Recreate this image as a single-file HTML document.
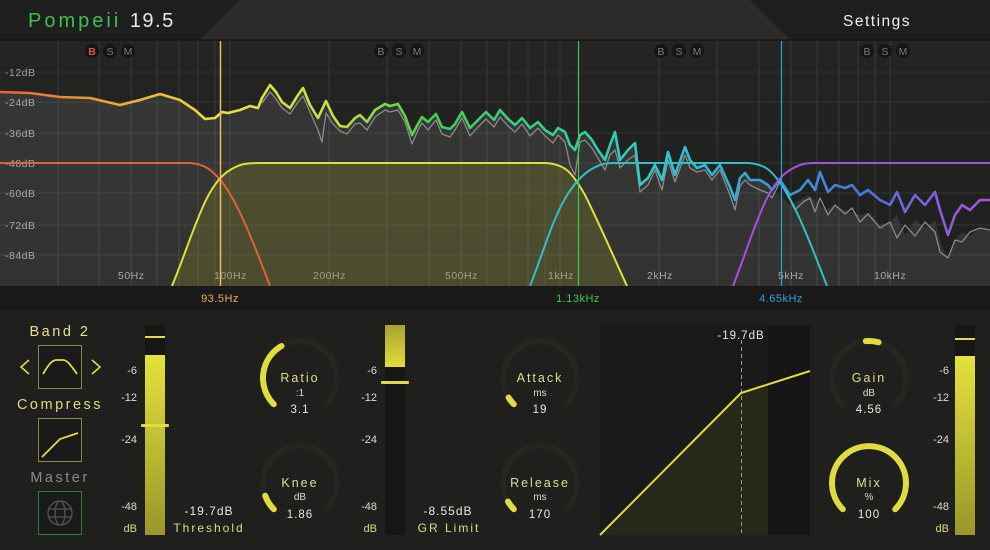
<!DOCTYPE html>
<html><head><meta charset="utf-8"><style>
body{margin:0;width:990px;height:550px;overflow:hidden;background:#1f1f1e;font-family:"Liberation Sans","DejaVu Sans",sans-serif}
svg{display:block}
</style></head><body>
<svg width="990" height="550" viewBox="0 0 990 550" xmlns="http://www.w3.org/2000/svg" font-family="Liberation Sans, DejaVu Sans, sans-serif">
<defs>
<linearGradient id="abg" x1="0" y1="0" x2="0" y2="1"><stop offset="0" stop-color="#242423"/><stop offset="1" stop-color="#1e1e1d"/></linearGradient>
<linearGradient id="spec" x1="0" y1="0" x2="990" y2="0" gradientUnits="userSpaceOnUse">
<stop offset="0" stop-color="#e8603a"/><stop offset="0.1" stop-color="#e8a030"/><stop offset="0.22" stop-color="#e8e040"/><stop offset="0.34" stop-color="#c8e040"/><stop offset="0.43" stop-color="#40d050"/><stop offset="0.58" stop-color="#30d0a0"/><stop offset="0.66" stop-color="#30c8d0"/><stop offset="0.78" stop-color="#30a0d8"/><stop offset="0.88" stop-color="#5070e0"/><stop offset="1" stop-color="#b050e0"/></linearGradient>
<linearGradient id="mtr" x1="0" y1="0" x2="0" y2="1"><stop offset="0" stop-color="#e4e23a"/><stop offset="1" stop-color="#9a962a"/></linearGradient>
<linearGradient id="mtr2" x1="0" y1="0" x2="0" y2="1"><stop offset="0" stop-color="#a8a230"/><stop offset="1" stop-color="#e0de3a"/></linearGradient>
</defs>
<!-- header -->
<rect x="0" y="0" width="990" height="40" fill="#1e1e1e"/>
<polygon points="240,0 750,0 790,40 200,40" fill="#2d2b29"/>
<line x1="0" y1="40" x2="990" y2="40" stroke="#111" stroke-width="1"/>
<text x="28" y="27" font-size="20" letter-spacing="3" fill="#3cc050">Pompeii <tspan fill="#e8e8e8" letter-spacing="1.5">19.5</tspan></text>
<text x="843" y="26" font-size="15.5" letter-spacing="1.5" fill="#eeeeee">Settings</text>
<!-- analyzer -->
<rect x="0" y="41" width="990" height="245" fill="url(#abg)"/>
<g stroke="#2f3530" stroke-width="1">
<line x1="0" y1="72" x2="990" y2="72"/><line x1="0" y1="102" x2="990" y2="102"/><line x1="0" y1="133" x2="990" y2="133"/><line x1="0" y1="163" x2="990" y2="163"/><line x1="0" y1="193" x2="990" y2="193"/><line x1="0" y1="225" x2="990" y2="225"/><line x1="0" y1="255" x2="990" y2="255"/>
</g>
<g stroke="#383838" stroke-width="1">
<line x1="58" y1="41" x2="58" y2="286"/><line x1="99" y1="41" x2="99" y2="286"/><line x1="131" y1="41" x2="131" y2="286"/><line x1="157" y1="41" x2="157" y2="286"/><line x1="179" y1="41" x2="179" y2="286"/><line x1="198" y1="41" x2="198" y2="286"/><line x1="215" y1="41" x2="215" y2="286"/><line x1="230" y1="41" x2="230" y2="286"/>
<line x1="329" y1="41" x2="329" y2="286"/><line x1="387" y1="41" x2="387" y2="286"/><line x1="429" y1="41" x2="429" y2="286"/><line x1="461" y1="41" x2="461" y2="286"/><line x1="487" y1="41" x2="487" y2="286"/><line x1="509" y1="41" x2="509" y2="286"/><line x1="528" y1="41" x2="528" y2="286"/><line x1="545" y1="41" x2="545" y2="286"/><line x1="560" y1="41" x2="560" y2="286"/>
<line x1="659" y1="41" x2="659" y2="286"/><line x1="717" y1="41" x2="717" y2="286"/><line x1="759" y1="41" x2="759" y2="286"/><line x1="791" y1="41" x2="791" y2="286"/><line x1="817" y1="41" x2="817" y2="286"/><line x1="839" y1="41" x2="839" y2="286"/><line x1="858" y1="41" x2="858" y2="286"/><line x1="875" y1="41" x2="875" y2="286"/><line x1="890" y1="41" x2="890" y2="286"/>
</g>
<g font-size="10.5" fill="#a0a0a0" letter-spacing="0.5">
<text x="5" y="76">-12dB</text><text x="5" y="106">-24dB</text><text x="5" y="137">-36dB</text><text x="5" y="167">-48dB</text><text x="5" y="197">-60dB</text><text x="5" y="229">-72dB</text><text x="5" y="259">-84dB</text>
<text x="118" y="279">50Hz</text><text x="214" y="279">100Hz</text><text x="313" y="279">200Hz</text><text x="445" y="279">500Hz</text><text x="548" y="279">1kHz</text><text x="647" y="279">2kHz</text><text x="778" y="279">5kHz</text><text x="874" y="279">10kHz</text>
</g>
<!-- spectrum fill -->
<path fill="rgba(255,255,255,0.09)" d="M0,92 L30,93 L60,97 L90,98 L120,105 L140,100 L160,94 L180,100 L195,110 L205,119 L215,118 L222,112 L228,113 L240,110 L250,106 L258,108 L262,98 L270,85 L276,92 L282,102 L290,108 L298,95 L303,88 L310,105 L318,118 L326,101 L333,116 L340,126 L347,127 L355,118 L360,115 L367,122 L375,110 L385,104 L390,106 L398,104 L405,116 L412,135 L418,124 L422,117 L428,122 L436,114 L442,127 L450,129 L455,124 L462,112 L470,128 L478,120 L486,112 L494,120 L500,110 L508,119 L515,125 L522,118 L530,128 L538,122 L545,130 L553,135 L558,128 L565,132 L570,145 L575,150 L580,135 L585,132 L592,140 L598,150 L605,160 L610,145 L615,132 L620,160 L628,150 L635,143 L640,185 L648,178 L655,165 L662,180 L668,152 L675,175 L685,147 L690,160 L697,168 L705,165 L712,175 L720,165 L730,187 L735,200 L740,178 L745,173 L750,180 L760,180 L768,185 L772,190 L780,195 L790,205 L800,200 L808,195 L815,200 L825,210 L835,205 L845,210 L860,215 L870,212 L880,225 L890,222 L897,215 L905,235 L915,220 L925,228 L935,220 L940,240 L948,260 L955,240 L962,232 L970,236 L980,228 L990,230 L990,286 L0,286 Z"/>
<path fill="rgba(140,140,40,0.28)" d="M172,286 C195,230 205,185 230,170 C240,164 245,163 260,163 L545,163 C565,164 572,172 585,195 C600,225 615,260 627,286 Z"/>
<!-- grey spectrum -->
<path fill="none" stroke="#8a8a8a" stroke-width="1.3" stroke-linejoin="round" d="M262,103 L270,92 L276,99 L282,108 L290,114 L298,102 L303,96 L310,112 L318,130 L322,142 L326,113 L333,124 L340,131 L347,134 L355,124 L360,123 L367,130 L375,117 L385,110 L390,112 L398,110 L405,122 L412,144 L418,130 L422,123 L428,130 L436,120 L442,134 L450,137 L455,130 L462,118 L470,136 L478,127 L486,119 L494,127 L500,117 L508,126 L515,132 L522,124 L530,136 L538,128 L545,136 L553,143 L558,135 L565,142 L570,165 L575,175 L580,142 L585,140 L592,148 L598,158 L605,170 L610,155 L615,150 L620,168 L628,160 L635,155 L640,192 L648,185 L655,170 L662,190 L668,160 L675,182 L685,155 L690,168 L697,172 L705,170 L712,180 L720,170 L730,195 L735,210 L740,186 L745,180 L750,185 L760,190 L768,193 L772,198 L780,182 L790,200 L795,210 L803,202 L810,198 L815,212 L820,198 L828,215 L835,205 L845,214 L852,208 L860,222 L868,214 L880,228 L890,222 L897,238 L905,225 L915,236 L925,222 L935,232 L940,252 L948,258 L955,240 L962,242 L970,232 L980,228 L990,230"/>
<!-- colored spectrum -->
<path fill="none" stroke="url(#spec)" stroke-width="2.6" stroke-linejoin="round" d="M0,92 L30,93 L60,97 L90,98 L120,105 L140,100 L160,94 L180,100 L195,110 L205,119 L215,118 L222,112 L228,113 L240,110 L250,106 L258,108 L262,98 L270,85 L276,92 L282,102 L290,108 L298,95 L303,88 L310,105 L318,118 L326,101 L333,116 L340,126 L347,127 L355,118 L360,115 L367,122 L375,110 L385,104 L390,106 L398,104 L405,116 L412,135 L418,124 L422,117 L428,122 L436,114 L442,127 L450,129 L455,124 L462,112 L470,128 L478,120 L486,112 L494,120 L500,110 L508,119 L515,125 L522,118 L530,128 L538,122 L545,130 L553,135 L558,128 L565,132 L570,145 L575,150 L580,135 L585,132 L592,140 L598,150 L605,160 L610,145 L615,132 L620,160 L628,150 L635,143 L640,185 L648,178 L655,165 L662,180 L668,152 L675,175 L685,147 L690,160 L697,168 L705,165 L712,175 L720,165 L730,187 L735,200 L740,178 L745,173 L750,180 L760,180 L768,185 L772,190 L780,180 L790,195 L800,190 L808,180 L815,190 L820,172 L828,192 L835,185 L845,188 L852,185 L860,195 L868,190 L880,200 L890,205 L897,192 L905,212 L915,195 L925,205 L935,192 L940,210 L948,235 L955,215 L962,205 L970,210 L980,200 L990,200"/>
<!-- band curves -->
<path fill="none" stroke="#e06038" stroke-width="2" d="M0,163 L190,163 C205,164 212,170 222,182 C240,205 258,255 270,286"/>
<path fill="none" stroke="#dede40" stroke-width="2" d="M172,286 C195,230 205,185 230,170 C240,164 245,163 260,163 L545,163 C565,164 572,172 585,195 C600,225 615,260 627,286"/>
<path fill="none" stroke="#30c0c8" stroke-width="2" d="M530,286 C550,235 560,190 590,170 C600,164 605,163 615,163 L748,163 C765,164 772,170 785,190 C800,215 815,255 827,286"/>
<path fill="none" stroke="#a650e0" stroke-width="2" d="M733,286 C755,230 765,185 790,170 C800,164 805,163 815,163 L990,163"/>
<!-- crossovers -->
<line x1="220.5" y1="41" x2="220.5" y2="286" stroke="#f0b858" stroke-width="1.5"/>
<line x1="578.5" y1="41" x2="578.5" y2="286" stroke="#40c850" stroke-width="1.2"/>
<line x1="781.5" y1="41" x2="781.5" y2="286" stroke="#30a0e0" stroke-width="1.2"/>
<!-- BSM -->
<g font-size="10.5" text-anchor="middle">
<g fill="#151515"><circle cx="92" cy="51" r="7"/><circle cx="110" cy="51" r="7"/><circle cx="128" cy="51" r="7"/><circle cx="381" cy="51" r="7"/><circle cx="399" cy="51" r="7"/><circle cx="417" cy="51" r="7"/><circle cx="661" cy="51" r="7"/><circle cx="679" cy="51" r="7"/><circle cx="697" cy="51" r="7"/><circle cx="867" cy="51" r="7"/><circle cx="885" cy="51" r="7"/><circle cx="903" cy="51" r="7"/></g>
<g fill="#7a7a7a"><text x="92" y="55" fill="#e85040" font-weight="bold">B</text><text x="110" y="55">S</text><text x="128" y="55">M</text><text x="381" y="55">B</text><text x="399" y="55">S</text><text x="417" y="55">M</text><text x="661" y="55">B</text><text x="679" y="55">S</text><text x="697" y="55">M</text><text x="867" y="55">B</text><text x="885" y="55">S</text><text x="903" y="55">M</text></g>
</g>
<!-- freq strip -->
<rect x="0" y="286" width="990" height="24" fill="#191919"/>
<g font-size="11" text-anchor="middle" letter-spacing="0.5">
<text x="220" y="302" fill="#f0b050">93.5Hz</text><text x="578" y="302" fill="#40c850">1.13kHz</text><text x="781" y="302" fill="#30a0e0">4.65kHz</text>
</g>
<!-- bottom left -->
<g text-anchor="middle" letter-spacing="2.5">
<text x="60" y="336" font-size="14.5" fill="#e8e090">Band 2</text>
<text x="60" y="409" font-size="14.5" fill="#e0dc80">Compress</text>
<text x="60" y="482" font-size="14.5" fill="#8a8a8a">Master</text>
</g>
<rect x="38.5" y="345.5" width="43" height="43" fill="#1a1a1a" stroke="#8a8a3a"/>
<path d="M43,374 C50,362 53,360 57,360 L63,360 C67,360 70,364 77,374" fill="none" stroke="#e0dc40" stroke-width="1.8"/>
<path d="M29,360 L21,367 L29,374" fill="none" stroke="#e0dc40" stroke-width="1.6"/>
<path d="M92,360 L100,367 L92,374" fill="none" stroke="#e0dc40" stroke-width="1.6"/>
<rect x="38.5" y="418.5" width="43" height="43" fill="#1a1a1a" stroke="#8a8a3a"/>
<path d="M42,457 L60,439 L78,433" fill="none" stroke="#e0dc40" stroke-width="1.8"/>
<rect x="38.5" y="491.5" width="43" height="43" fill="#1a1a1a" stroke="#2e7a3a"/>
<g fill="none" stroke="#555" stroke-width="1.3"><circle cx="60" cy="513" r="12"/><ellipse cx="60" cy="513" rx="5" ry="12"/><line x1="48" y1="509" x2="72" y2="509"/><line x1="48" y1="517" x2="72" y2="517"/></g>
<!-- meter 1 -->
<rect x="145" y="325" width="20" height="210" fill="#161616"/>
<rect x="145" y="355" width="20" height="180" fill="url(#mtr)"/>
<rect x="145" y="336" width="20" height="2" fill="#e0dc40"/>
<rect x="141" y="424" width="28" height="3" rx="1" fill="#e0dc40"/>
<g font-size="11" fill="#dcdcd0" text-anchor="end">
<text x="137" y="374">-6</text><text x="137" y="401">-12</text><text x="137" y="443">-24</text><text x="137" y="510">-48</text><text x="137" y="532" fill="#e0dc80">dB</text>
<text x="377" y="374">-6</text><text x="377" y="401">-12</text><text x="377" y="443">-24</text><text x="377" y="510">-48</text><text x="377" y="532" fill="#e0dc80">dB</text>
<text x="949" y="374">-6</text><text x="949" y="401">-12</text><text x="949" y="443">-24</text><text x="949" y="510">-48</text><text x="949" y="532" fill="#e0dc80">dB</text>
</g>
<g font-size="12" text-anchor="middle" letter-spacing="1">
<text x="209" y="515" fill="#e8e8e0">-19.7dB</text><text x="209" y="532" fill="#e0dc80" letter-spacing="2">Threshold</text>
<text x="448" y="515" fill="#e8e8e0">-8.55dB</text><text x="449" y="532" fill="#e0dc80" letter-spacing="2">GR Limit</text>
</g>
<!-- meter 2 -->
<rect x="385" y="325" width="20" height="210" fill="#161616"/>
<rect x="385" y="325" width="20" height="42" fill="url(#mtr2)"/>
<rect x="381" y="381" width="28" height="3" rx="1" fill="#e0dc40"/>
<!-- meter 3 -->
<rect x="955" y="325" width="20" height="210" fill="#161616"/>
<rect x="955" y="356" width="20" height="179" fill="url(#mtr)"/>
<rect x="955" y="338" width="20" height="2" fill="#e0dc40"/>
<!-- knobs -->
<g fill="none" stroke-width="6" stroke-linecap="round">
<g transform="translate(300,378)"><path d="M-26.2,26.2 A37,37 0 1 1 26.2,26.2" stroke="#262620"/><path d="M-26.2,26.2 A37,37 0 0 1 -18.5,-32" stroke="#e0dc40"/></g>
<g transform="translate(300,483)"><path d="M-26.2,26.2 A37,37 0 1 1 26.2,26.2" stroke="#262620"/><path d="M-26.2,26.2 A37,37 0 0 1 -34.8,12.7" stroke="#e0dc40"/></g>
<g transform="translate(540,378)"><path d="M-26.2,26.2 A37,37 0 1 1 26.2,26.2" stroke="#262620"/><path d="M-26.2,26.2 A37,37 0 0 1 -31.4,19.6" stroke="#e0dc40"/></g>
<g transform="translate(540,483)"><path d="M-26.2,26.2 A37,37 0 1 1 26.2,26.2" stroke="#262620"/><path d="M-26.2,26.2 A37,37 0 0 1 -32,18.5" stroke="#e0dc40"/></g>
<g transform="translate(869,378)"><path d="M-26.2,26.2 A37,37 0 1 1 26.2,26.2" stroke="#262620"/><path d="M-3.2,-36.9 A37,37 0 0 1 9.6,-35.7" stroke="#e0dc40"/></g>
<g transform="translate(869,483)"><path d="M-26.2,26.2 A37,37 0 1 1 26.2,26.2" stroke="#e0dc40"/></g>
</g>
<g text-anchor="middle">
<g font-size="12.5" fill="#e0dc90" letter-spacing="2">
<text x="300" y="382">Ratio</text><text x="300" y="487">Knee</text><text x="540" y="382">Attack</text><text x="540" y="487">Release</text><text x="869" y="382">Gain</text><text x="869" y="487">Mix</text>
</g>
<g font-size="10" fill="#dcdcc8">
<text x="300" y="396">:1</text><text x="300" y="500">dB</text><text x="540" y="396">ms</text><text x="540" y="500">ms</text><text x="869" y="396">dB</text><text x="869" y="500">%</text>
</g>
<g font-size="11.5" fill="#e8e8e0" letter-spacing="1">
<text x="300" y="413">3.1</text><text x="300" y="518">1.86</text><text x="540" y="413">19</text><text x="540" y="518">170</text><text x="869" y="413">4.56</text><text x="869" y="518">100</text>
</g>
</g>
<!-- transfer graph -->
<rect x="600" y="325" width="210" height="210" fill="#1a1a1a"/>
<rect x="768" y="325" width="42" height="210" fill="#151515"/>
<polygon points="600,535 741,393 768,385 768,535" fill="#28281a"/>
<line x1="741.5" y1="340" x2="741.5" y2="535" stroke="#999" stroke-width="1" stroke-dasharray="4,3"/>
<polyline points="600,535 741,393 810,371" fill="none" stroke="#e0dc40" stroke-width="2"/>
<text x="741" y="339" font-size="11.5" fill="#e8e8e0" text-anchor="middle" letter-spacing="1">-19.7dB</text>
</svg>
</body></html>
